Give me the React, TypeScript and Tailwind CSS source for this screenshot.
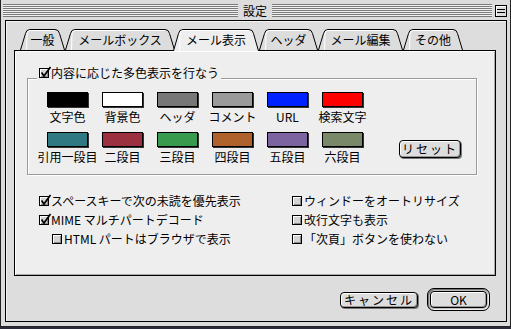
import React from 'react';

const FONT = "font-['Noto_Sans_CJK_JP','Noto_Sans_CJK_SC',sans-serif]";

function Tab({ label, className, width, active = false }: { label: string; className: string; width: number; active?: boolean }) {
  const h = active ? 22 : 21;
  const w = width;
  const d = `M0.5 ${h} L5.5 4.5 Q6.3 0.5 10 0.5 L ${w - 10} 0.5 Q ${w - 6.3} 0.5 ${w - 5.5} 4.5 L ${w - 0.5} ${h}`;
  return (
    <div className={`relative flex justify-center ${className} ${active ? 'z-10 h-[22px]' : 'h-[21px]'}`}>
      <svg className="absolute inset-0" width={w} height={h} viewBox={`0 0 ${w} ${h}`}>
        <path d={d} fill={active ? '#eeeeee' : '#dddddd'} stroke="#000" strokeWidth="1" />
        <path d={`M6.5 ${h} L7 5 Q7.6 1.5 10 1.5 L ${w - 10} 1.5`} fill="none" stroke="#fff" strokeWidth="1" />
      </svg>
      <span className="relative mt-[4px] leading-[14px]">{label}</span>
    </div>
  );
}

function Check({ checked = false }: { checked?: boolean }) {
  return (
    <span className="relative inline-block w-[10px] h-[10px] shrink-0 border border-black bg-[#d4d4d4] shadow-[inset_1px_1px_0_#fff,inset_-1px_-1px_0_#8a8a8a]">
      {checked && (
        <svg className="absolute -left-[1px] -top-[3px]" width="13" height="13" viewBox="0 0 13 13">
          <path d="M2.5 6.5 L5 10 L11.5 1" fill="none" stroke="#000" strokeWidth="1.7" />
        </svg>
      )}
    </span>
  );
}

function Swatch({ color, label }: { color: string; label: string }) {
  return (
    <div className="w-[55px] flex flex-col items-center">
      <div className={`w-[41px] h-[15px] border border-black shadow-[1px_1px_0_#333] ${color}`} />
      <div className="mt-[3px] whitespace-nowrap leading-[14px]">{label}</div>
    </div>
  );
}

function Option({ label, checked = false, className = '' }: { label: string; checked?: boolean; className?: string }) {
  return (
    <div className={`h-[19px] flex items-center gap-[2px] whitespace-nowrap ${className}`}>
      <Check checked={checked} />
      <span className="leading-[14px]">{label}</span>
    </div>
  );
}

function Stripes({ className = '' }: { className?: string }) {
  return (
    <div className={`h-[13px] bg-[repeating-linear-gradient(to_bottom,#7a7a7a_0px,#7a7a7a_1px,#f2f2f2_1px,#f2f2f2_2px)] ${className}`} />
  );
}

export default function App() {
  return (
    <div className={`w-[511px] h-[329px] bg-[#2a2a3a] text-[12px] leading-[14px] text-black ${FONT}`}>
      <div className="w-[511px] h-[327px] flex flex-col bg-[#dcdcdc] border-x border-b border-[#222] pl-[4px] pr-[3px] pb-[4px]">
        {/* title bar */}
        <div className="h-[20px] -ml-[2px] grid grid-cols-[1fr_auto_1fr] items-center pt-[1px]">
          <Stripes />
          <div className="px-[5px] leading-[14px]">設定</div>
          <div className="flex items-center">
            <Stripes className="flex-1" />
            <div className="ml-[3px] w-[12px] h-[12px] border border-black bg-[#ddd] flex flex-col justify-center gap-[2px] px-[1px] shadow-[inset_1px_1px_0_#fff]">
              <div className="h-px bg-black" />
              <div className="h-px bg-black" />
            </div>
          </div>
        </div>

        {/* window content */}
        <div className="flex-1 border border-black bg-[#dddddd] flex flex-col pt-[8px] shadow-[inset_1px_1px_0_#f4f4f4]">
          <div className="ml-[14px] flex h-[21px]">
            <Tab label="一般" width={45} className="w-[45px]" />
            <Tab label="メールボックス" width={110} className="w-[110px]" />
            <Tab label="メール表示" width={86} className="w-[86px] -ml-[2px]" active />
            <Tab label="ヘッダ" width={59} className="w-[59px]" />
            <Tab label="メール編集" width={85} className="w-[85px]" />
            <Tab label="その他" width={60} className="w-[60px]" />
          </div>

          {/* tab panel */}
          <div className="ml-[8px] w-[482px] h-[226px] border border-black bg-[#eeeeee] shadow-[inset_1px_1px_0_#fff,inset_-1px_-1px_0_#a8a8a8] flex flex-col">
            {/* colour group */}
            <div className="relative mt-[27px] ml-[12px] w-[450px] h-[97px] border border-[#9a9a9a] shadow-[inset_1px_1px_0_#fff,1px_1px_0_#fff] pt-[13px] pl-[12px]">
              <div className="absolute left-[9px] -top-[13px] flex items-center gap-[2px] bg-[#eeeeee] px-[2px] h-[14px]">
                <Check checked />
                <span className="leading-[14px]">内容に応じた多色表示を行なう</span>
              </div>
              <div className="flex">
                <Swatch color="bg-black" label="文字色" />
                <Swatch color="bg-white" label="背景色" />
                <Swatch color="bg-[#777777]" label="ヘッダ" />
                <Swatch color="bg-[#9a9a9a]" label="コメント" />
                <Swatch color="bg-[#0022ff]" label="URL" />
                <Swatch color="bg-[#ff0000]" label="検索文字" />
              </div>
              <div className="flex items-start mt-[8px]">
                <Swatch color="bg-[#2f7a82]" label="引用一段目" />
                <Swatch color="bg-[#9a3040]" label="二段目" />
                <Swatch color="bg-[#389a4c]" label="三段目" />
                <Swatch color="bg-[#b0622c]" label="四段目" />
                <Swatch color="bg-[#7c64a0]" label="五段目" />
                <Swatch color="bg-[#798868]" label="六段目" />
                <button className="ml-[29px] mt-[8px] w-[62px] h-[18px] rounded-[4px] border border-black bg-[#dddddd] shadow-[inset_1px_1px_0_#fff,inset_-1px_-1px_0_#999,1px_1px_0_#777] leading-[14px] tracking-[2px]">
                  リセット
                </button>
              </div>
            </div>

            {/* options */}
            <div className="mt-[16px] ml-[24px] grid grid-cols-[253px_1fr]">
              <div className="flex flex-col">
                <Option checked label="スペースキーで次の未読を優先表示" />
                <Option checked label="MIME マルチパートデコード" />
                <Option label="HTML パートはブラウザで表示" className="ml-[13px]" />
              </div>
              <div className="flex flex-col">
                <Option label="ウィンドーをオートリサイズ" />
                <Option label="改行文字も表示" />
                <Option label="「次頁」ボタンを使わない" />
              </div>
            </div>
          </div>

          {/* dialog buttons */}
          <div className="mt-[12px] mr-[16px] flex justify-end items-center gap-[9px]">
            <button className="w-[78px] h-[16px] rounded-[4px] border border-black bg-[#dddddd] shadow-[inset_1px_1px_0_#fff,inset_-1px_-1px_0_#999,1px_1px_0_#777] leading-[14px] tracking-[2px]">
              キャンセル
            </button>
            <div className="w-[63px] h-[23px] rounded-[7px] border border-black bg-[#bdbdbd] shadow-[inset_1px_1px_0_#777,inset_-1px_-1px_0_#eee] p-[2px]">
              <button className="w-full h-full rounded-[4px] border border-black bg-[#dddddd] shadow-[inset_1px_1px_0_#fff,inset_-1px_-1px_0_#999] leading-[14px]">
                OK
              </button>
            </div>
          </div>
        </div>
      </div>
    </div>
  );
}
